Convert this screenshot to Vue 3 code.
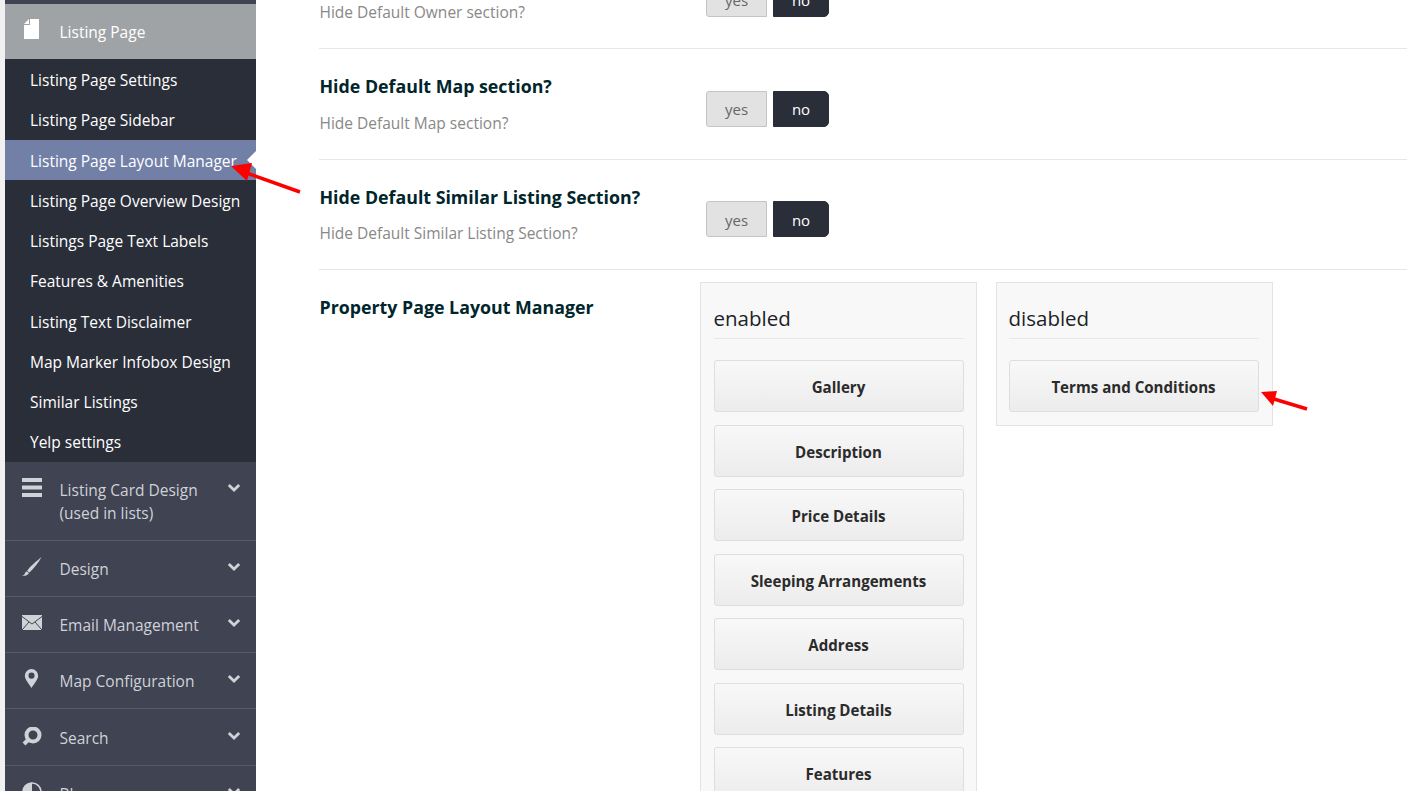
<script setup>
const subItems = [
  { label: 'Listing Page Settings' },
  { label: 'Listing Page Sidebar' },
  { label: 'Listing Page Layout Manager', active: true },
  { label: 'Listing Page Overview Design' },
  { label: 'Listings Page Text Labels' },
  { label: 'Features & Amenities' },
  { label: 'Listing Text Disclaimer' },
  { label: 'Map Marker Infobox Design' },
  { label: 'Similar Listings' },
  { label: 'Yelp settings' },
]
const rows = [
  { title: 'Hide Default Map section?', sub: 'Hide Default Map section?' },
  { title: 'Hide Default Similar Listing Section?', sub: 'Hide Default Similar Listing Section?' },
]
const enabled = ['Gallery', 'Description', 'Price Details', 'Sleeping Arrangements', 'Address', 'Listing Details', 'Features']
</script>

<template>
  <div class="page">
    <aside class="sidebar">
      <div class="top-strip"></div>
      <div class="head">
        <svg class="ico" viewBox="0 0 15 20" width="15" height="20"><path d="M6 0h9v20H0V6h6z" fill="#fff"/><path d="M0 5 5 0v5z" fill="#fff"/></svg>
        <span>Listing Page</span>
      </div>
      <ul class="sub">
        <li v-for="s in subItems" :key="s.label" :class="{ active: s.active }">{{ s.label }}</li>
      </ul>
      <div class="nav tall">
        <svg class="ico" viewBox="0 0 20 20" width="20" height="20"><path d="M0 0h20v4H0zM0 7.500h20v4H0zM0 15h20v4H0z" fill="#d0d2d8"/></svg>
        <span>Listing Card Design<br>(used in lists)</span>
        <svg class="chev" viewBox="0 0 14 10" width="14" height="10"><path d="M1.800 2 7 7l5.200-5" fill="none" stroke="#d0d2d8" stroke-width="2.800"/></svg>
      </div>
      <div class="nav">
        <svg class="ico" viewBox="0 0 20 20" width="20" height="20"><path d="M19.500 0C15 4 8 9 5 14l2.500 1.500C12 11 17 5 19.500 0z" fill="#d0d2d8"/><path d="M4.500 14.500C3 15 3 17 2 18l-2 1c3 .5 6-1 7-3z" fill="#d0d2d8"/></svg>
        <span>Design</span>
        <svg class="chev" viewBox="0 0 14 10" width="14" height="10"><path d="M1.800 2 7 7l5.200-5" fill="none" stroke="#d0d2d8" stroke-width="2.800"/></svg>
      </div>
      <div class="nav mail">
        <svg class="ico" viewBox="0 0 20 15" width="20" height="15"><path d="M0 0h20v15H0z" fill="#d0d2d8"/><path d="M0 1.500 10 9l10-7.500M0 15l7-8M20 15l-7-8" fill="none" stroke="#3f4352" stroke-width="1"/></svg>
        <span>Email Management</span>
        <svg class="chev" viewBox="0 0 14 10" width="14" height="10"><path d="M1.800 2 7 7l5.200-5" fill="none" stroke="#d0d2d8" stroke-width="2.800"/></svg>
      </div>
      <div class="nav">
        <svg class="ico pin" viewBox="0 0 14 20" width="15" height="19"><path fill-rule="evenodd" d="M7 0a7 7 0 0 1 7 7c0 4-4 8-7 13C4 15 0 11 0 7a7 7 0 0 1 7-7zm0 3.800a3.200 3.200 0 1 0 0 6.400 3.200 3.200 0 0 0 0-6.400z" fill="#d0d2d8"/></svg>
        <span>Map Configuration</span>
        <svg class="chev" viewBox="0 0 14 10" width="14" height="10"><path d="M1.800 2 7 7l5.200-5" fill="none" stroke="#d0d2d8" stroke-width="2.800"/></svg>
      </div>
      <div class="nav search">
        <svg class="ico" viewBox="0 0 20 20" width="20" height="20"><circle cx="11" cy="8" r="6.500" fill="none" stroke="#d0d2d8" stroke-width="4"/><path d="M6.500 12.500 2 17" stroke="#d0d2d8" stroke-width="4"/></svg>
        <span>Search</span>
        <svg class="chev" viewBox="0 0 14 10" width="14" height="10"><path d="M1.800 2 7 7l5.200-5" fill="none" stroke="#d0d2d8" stroke-width="2.800"/></svg>
      </div>
      <div class="nav last">
        <svg class="ico" viewBox="0 0 20 20" width="20" height="20"><circle cx="10" cy="10" r="9" fill="none" stroke="#d0d2d8" stroke-width="1.500"/><path d="M10 .5V19.500A9.500 9.500 0 0 1 10 .5z" fill="#d0d2d8"/></svg>
        <span>Blog</span>
        <svg class="chev" viewBox="0 0 14 10" width="14" height="10"><path d="M1.800 2 7 7l5.200-5" fill="none" stroke="#d0d2d8" stroke-width="2.800"/></svg>
      </div>
    </aside>

    <main class="main">
      <section class="row first">
        <div class="label">
          <p class="desc">Hide Default Owner section?</p>
        </div>
        <div class="toggle">
          <button class="yes">yes</button>
          <button class="no">no</button>
        </div>
      </section>
      <section v-for="r in rows" :key="r.title" class="row">
        <div class="label">
          <h3>{{ r.title }}</h3>
          <p class="desc">{{ r.sub }}</p>
        </div>
        <div class="toggle">
          <button class="yes">yes</button>
          <button class="no">no</button>
        </div>
      </section>
      <section class="manager">
        <h3>Property Page Layout Manager</h3>
        <div class="boxes">
          <div class="box">
            <h4>enabled</h4>
            <div v-for="e in enabled" :key="e" class="block">{{ e }}</div>
          </div>
          <div class="box short">
            <h4>disabled</h4>
            <div class="block">Terms and Conditions</div>
          </div>
        </div>
      </section>
    </main>

    <svg class="arrow arrow-a" width="72" height="36" viewBox="0 0 72 36"><path d="M70 32 14 12" stroke="#f00" stroke-width="3.500"/><path d="M1 6 22 3l-5 18z" fill="#f00"/></svg>
    <svg class="arrow arrow-b" width="50" height="26" viewBox="0 0 50 26"><path d="M47 21 14 11" stroke="#f00" stroke-width="3.500"/><path d="M1 4 17 3l-4 15z" fill="#f00"/></svg>
  </div>
</template>

<style>
html, body { margin: 0; background: #fff; }
</style>

<style scoped>
.page {
  position: relative;
  display: flex;
  height: 791px;
  overflow: hidden;
  font-family: "Open Sans", sans-serif;
  border-left: 5px solid #f1f1f1;
  box-sizing: border-box;
  background: #fff;
}
.sidebar { width: 251px; flex: none; font-size: 15.500px; color: #d0d2d8; background: #3f4352; }
.top-strip { height: 4px; background: #3f4352; }
.head {
  height: 55px;
  display: flex;
  align-items: center;
  background: #9fa3a6;
  color: #fff;
  padding-left: 19px;
}
.head .ico { margin-right: 20.500px; margin-top: -5px; }
.head span { padding-top: 1px; }
.sub { list-style: none; margin: 0; padding: 0; height: 403px; background: #2a2e39; color: #fff; }
.sub li { height: 40.250px; line-height: 43.300px; padding-left: 25px; position: relative; white-space: nowrap; }
.sub li.active { background: #7280a7; }
.sub li.active::after {
  content: "";
  position: absolute;
  right: 0;
  top: 50%;
  margin-top: -9px;
  border: 9px solid transparent;
  border-right-color: #fff;
  border-left-width: 0;
}
.nav {
  border-bottom: 1px solid #555a6b;
  padding: 16px 15px 0 17px;
  height: 39px;
  line-height: 23px;
  position: relative;
}
.nav.tall { height: 62px; }
.nav.mail { padding-top: 18px; height: 37px; }
.nav.search { height: 38px; padding-top: 18px; }
.nav.last { border: 0; }
.nav span { position: absolute; left: 54.500px; top: 17px; }
.nav.search span { top: 18px; }
.nav .ico { display: block; }
.nav .ico.pin { margin-left: 2px; }
.nav .chev { position: absolute; right: 15px; top: 21px; }
.nav.search .chev { top: 22px; }
.main { flex: 1; min-width: 0; padding-left: 63px; }
.row {
  display: flex;
  border-bottom: 1px solid #e6e6e6;
  height: 109.500px;
}
.row.first { height: 48px; align-items: flex-end; }
.label { width: 386.500px; flex: none; padding-top: 25px; padding-left: .5px; box-sizing: border-box; }
.row.first .label { padding-top: 0; padding-bottom: 26px; }
.label h3, .manager h3 {
  margin: 0;
  font-size: 17.800px;
  line-height: 24px;
  font-weight: 700;
  color: #00252b;
}
.desc { margin: 14.500px 0 0; font-size: 15.500px; line-height: 20px; color: #888; }
.toggle { display: flex; gap: 6px; padding: 41.500px 0 0 .5px; }
.row.first .toggle { padding: 0 0 31px .5px; }
.toggle button {
  font: 15px/20px "Open Sans", sans-serif;
  height: 36px;
  padding: 1px 0 0;
  box-sizing: border-box;
  border: 1px solid #c4c4c4;
}
.yes { width: 61px; background: #e2e2e2; color: #666; border-radius: 3px 0 0 3px; }
.no { width: 56px; background: #2a2e39; color: #fff; border-color: #2a2e39 !important; border-radius: 0 5px 5px 0; }
.manager { display: flex; padding-top: 12px; }
.manager h3 { width: 380.500px; flex: none; padding-top: 13px; padding-left: .5px; box-sizing: border-box; }
.boxes { display: flex; gap: 19px; align-items: flex-start; }
.box {
  width: 277px;
  box-sizing: border-box;
  background: #f8f8f8;
  border: 1px solid #e4e4e4;
  padding: 22px 12px 13px 13px;
}
.box.short { padding-left: 12px; padding-right: 13px; }
.box h4 {
  margin: 0 0 21px;
  font-size: 20.500px;
  line-height: 27px;
  padding-bottom: 6px;
  font-weight: 400;
  color: #1c2326;
  border-bottom: 1px solid #e8e8e8;
}
.block {
  height: 52px;
  box-sizing: border-box;
  border: 1px solid #dedede;
  border-radius: 3px;
  background: linear-gradient(#f8f8f8, #ececec);
  text-align: center;
  line-height: 52px;
  font-size: 15.100px;
  font-weight: 700;
  color: #2b2b2b;
  margin-bottom: 12.500px;
}
.block:last-child { margin-bottom: 0; }
.arrow { position: absolute; pointer-events: none; }
.arrow-a { left: 225px; top: 160px; }
.arrow-b { left: 1255px; top: 388px; }
</style>
